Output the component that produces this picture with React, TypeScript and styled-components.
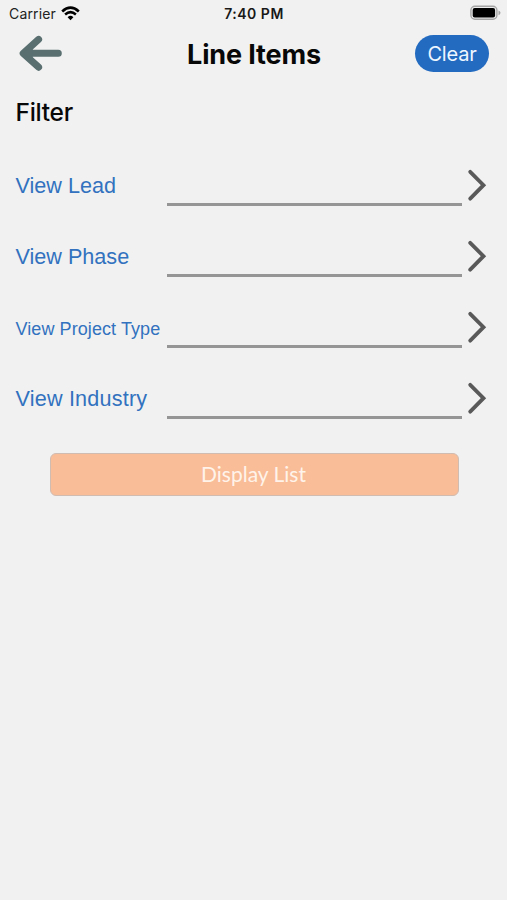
import React from 'react';
import styled, { createGlobalStyle } from 'styled-components';

const GlobalStyle = createGlobalStyle`
  * { box-sizing: border-box; }
  body { margin: 0; background: #f1f1f1; }
`;

const Screen = styled.div`
  width: 507px;
  height: 900px;
  background: #f1f1f1;
  color: #080808;
  font-family: Inter, sans-serif;
  overflow: hidden;
`;

const StatusBar = styled.div`
  height: 28px;
  padding: 0 6px 0 9px;
  display: grid;
  grid-template-columns: 1fr auto 1fr;
  align-items: center;
`;

const Carrier = styled.div`
  display: flex;
  align-items: center;
  gap: 5px;
  font-size: 14px;
  line-height: 28px;
  letter-spacing: 0.15px;
  color: #222;
  svg { display: block; margin-top: -2px; }
`;

const Time = styled.div`
  font-size: 14px;
  font-weight: 600;
  line-height: 28px;
  letter-spacing: 0.5px;
  margin-right: 2px;
  color: #181818;
`;

const Battery = styled.svg`
  display: block;
  justify-self: end;
  margin-top: -2px;
`;

const Header = styled.header`
  height: 52px;
  padding: 0 18px;
  display: grid;
  grid-template-columns: 1fr auto 1fr;
  align-items: center;
`;

const BackButton = styled.button`
  border: 0;
  padding: 0;
  background: none;
  justify-self: start;
  svg { display: block; }
`;

const Title = styled.h1`
  margin: 0;
  padding: 2px 0 0 1px;
  font-size: 27px;
  font-weight: 700;
  line-height: 50px;
  letter-spacing: -0.15px;
`;

const ClearButton = styled.button`
  justify-self: end;
  width: 74px;
  height: 37px;
  margin-top: -1px;
  padding: 1px 0 0;
  border: 0;
  border-radius: 19px;
  background: #236bc1;
  color: #eef6ff;
  font: 400 20px/36px Inter, sans-serif;
  letter-spacing: -0.2px;
`;

const SectionTitle = styled.h2`
  margin: 16px 0 0 15.5px;
  font-size: 24.5px;
  font-weight: 500;
  line-height: 32px;
  letter-spacing: -0.3px;
`;

const Filters = styled.div`
  padding: 22px 20px 0 15px;
`;

const FilterRow = styled.div`
  height: 71px;
  display: grid;
  grid-template-columns: 152px 295px 1fr;
`;

const Label = styled.span<{ $small?: boolean; $tracking?: number }>`
  padding-left: 0.5px;
  font-family: "Liberation Sans", Arial, sans-serif;
  font-size: ${p => (p.$small ? '18px' : '21.6px')};
  line-height: ${p => (p.$small ? '74px' : '72px')};
  letter-spacing: ${p => p.$tracking ?? 0}px;
  white-space: nowrap;
  color: #3272bf;
`;

const Field = styled.div`
  height: 56px;
  border-bottom: 3px solid #959595;
`;

const Chevron = styled.svg`
  display: block;
  margin: 18px 0 0 5px;
`;

const DisplayButton = styled.button`
  display: block;
  width: 409px;
  height: 43px;
  margin: 19px 0 0 50px;
  padding: 0 2px 2px 0;
  border: 1px solid #d1bcb2;
  border-radius: 6px;
  background: #f9bd98;
  color: #fff3ea;
  font: 400 21px/39px Lato, sans-serif;
`;

const filters = [
  { label: 'View Lead' },
  { label: 'View Phase' },
  { label: 'View Project Type', small: true, tracking: 0.08 },
  { label: 'View Industry', tracking: 0.2 },
];

export default function App() {
  return (
    <Screen>
      <GlobalStyle />
      <StatusBar>
        <Carrier>
          <span>Carrier</span>
          <svg width="19" height="15" viewBox="0 0 19 15" fill="none" stroke="#000">
            <path d="M1.2 5.4Q9.5-2 17.8 5.4" strokeWidth="2.7" />
            <path d="M4.1 8.5Q9.5 3.7 14.9 8.5" strokeWidth="2.5" />
            <path d="M6.6 11.2Q9.5 8.5 12.4 11.2L9.5 14.2Z" fill="#000" stroke="none" />
          </svg>
        </Carrier>
        <Time>7:40 PM</Time>
        <Battery width="31" height="16" viewBox="0 0 31 16">
          <rect x="0.9" y="1.2" width="26" height="13" rx="4" fill="#eee" stroke="#a5a5a5" strokeWidth="1.4" />
          <rect x="2.7" y="3" width="22.4" height="9.4" rx="2" fill="#000" />
          <path d="M28.5 5.4Q30.5 6.2 30.5 7.8T28.5 10.2Z" fill="#a5a5a5" />
        </Battery>
      </StatusBar>
      <Header>
        <BackButton aria-label="Back">
          <svg width="46" height="38" viewBox="0 0 46 38" fill="none" stroke="#596f70" strokeWidth="7" strokeLinecap="round" strokeLinejoin="round">
            <path d="M20.6 4.4L5.2 18.3L20.6 32.2M8 18.3H40.3" />
            <path d="M5.2 18.3L14.5 9.5V27Z" fill="#596f70" stroke="none" />
          </svg>
        </BackButton>
        <Title>Line Items</Title>
        <ClearButton>Clear</ClearButton>
      </Header>
      <SectionTitle>Filter</SectionTitle>
      <Filters>
        {filters.map(f => (
          <FilterRow key={f.label}>
            <Label $small={f.small} $tracking={f.tracking}>{f.label}</Label>
            <Field />
            <Chevron width="22" height="34" viewBox="0 0 22 34" fill="none" stroke="#595959" strokeWidth="3.8" strokeLinecap="round">
              <path d="M3.2 3.8L16.5 17.2L3.2 30.7" />
            </Chevron>
          </FilterRow>
        ))}
      </Filters>
      <DisplayButton>Display List</DisplayButton>
    </Screen>
  );
}
